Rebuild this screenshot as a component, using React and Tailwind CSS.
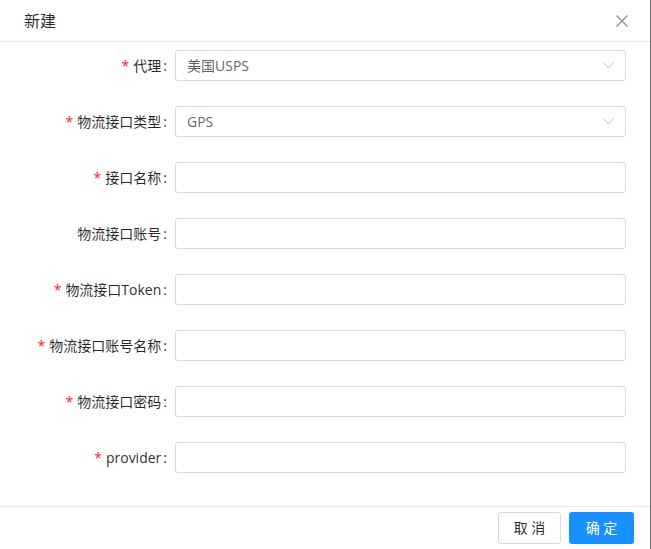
import React from "react";

const fields = [
  { label: "代理", required: true, value: "美国USPS", select: true },
  { label: "物流接口类型", required: true, value: "GPS", select: true },
  { label: "接口名称", required: true },
  { label: "物流接口账号", required: false },
  { label: "物流接口Token", required: true },
  { label: "物流接口账号名称", required: true },
  { label: "物流接口密码", required: true },
  { label: "provider", required: true },
];

const Chevron = () => (
  <svg width="11" height="7" viewBox="0 0 11 7" fill="none" className="text-[#bfbfbf]">
    <polyline points="0.5,0.5 5.5,6 10.5,0.5" stroke="currentColor" strokeWidth="1" />
  </svg>
);

const App = () => {
  return (
    <div
      className="w-[651px] h-[549px] bg-white border-r border-[#6b6b6b] overflow-hidden flex flex-col"
      style={{ fontFamily: '"Open Sans", "Noto Sans CJK SC", sans-serif' }}
    >
      {/* Header */}
      <div className="h-[42px] border-b border-[#e8e8e8] flex items-center justify-between pl-6 pr-[22px]">
        <h1 className="text-base text-black/85">新建</h1>
        <button className="text-black/45">
          <svg width="12" height="12" viewBox="0 0 12 12">
            <path d="M0.5 0.5L11.5 11.5M11.5 0.5L0.5 11.5" stroke="currentColor" strokeWidth="1.2" />
          </svg>
        </button>
      </div>

      {/* Body */}
      <div className="flex flex-col gap-[25px] pt-[8px] pb-[33px] pl-6 pr-6">
        {fields.map((f) => (
          <div key={f.label} className="flex items-center h-[31px]">
            <label className="w-[151px] shrink-0 flex items-center justify-end pr-[8px] text-sm text-black/85">
              {f.required && <span className="text-[#f5222d] mr-[4px] text-sm">*</span>}
              {f.label}
              <span className="ml-[2px]">:</span>
            </label>
            <div className="flex-1 h-[31px] border border-[#d9d9d9] rounded-[3px] flex items-center justify-between pl-[11px] pr-[11px] text-sm text-black/65">
              <span>{f.value || ""}</span>
              {f.select && <Chevron />}
            </div>
          </div>
        ))}
      </div>

      {/* Footer */}
      <div className="border-t border-[#e8e8e8] flex justify-end gap-[8px] pt-[5px] pr-4">
        <button className="w-[63px] h-[32px] border border-[#d9d9d9] rounded-[3px] text-sm text-black/85 bg-white">
          取 消
        </button>
        <button className="w-[65px] h-[32px] rounded-[3px] text-sm text-white bg-[#1890ff]">
          确 定
        </button>
      </div>
    </div>
  );
};

export default App;
